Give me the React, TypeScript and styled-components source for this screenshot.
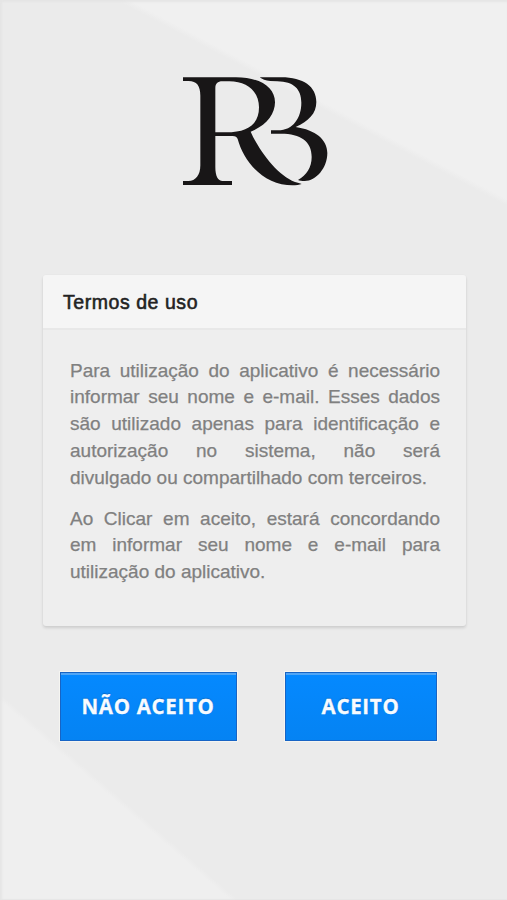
import React from "react";
import styled, { createGlobalStyle } from "styled-components";

const GlobalStyle = createGlobalStyle`
  * { box-sizing: border-box; }
  body { margin: 0; background: #ebebeb; }
`;

const Screen = styled.main`
  width: 100%;
  max-width: 507px;
  height: 900px;
  padding: 65px 41px 0 43px;
  overflow: hidden;
  display: flex;
  flex-direction: column;
  font-family: "Liberation Sans", Arial, sans-serif;
  background:
    linear-gradient(to bottom left, #f0f0f0 48.8%, transparent 50.5%) 120px 0 / 387px 204px no-repeat,
    linear-gradient(to top right, #efefef 48.8%, transparent 50.5%) 0 696px / 236px 204px no-repeat,
    #ebebeb;
  box-shadow: inset 2px 2px 2px #e5e5e5, inset 0 -1px 1px #e6e6e6;
`;

const Logo = styled.svg`
  width: 170px;
  height: 130px;
  margin-left: 127px;
  flex: none;
  fill: #181617;
`;

const Card = styled.section`
  height: 351px;
  margin-top: 80px;
  flex: none;
  border-radius: 3px;
  overflow: hidden;
  background: #eeeeee;
  box-shadow: 0 2px 3px rgba(0, 0, 0, 0.12), 0 0 2px rgba(0, 0, 0, 0.04);
`;

const CardTitle = styled.h1`
  height: 55px;
  margin: 0;
  padding: 0 20px;
  border-bottom: 2px solid #e8e8e8;
  background: #f5f5f5;
  color: #222222;
  font-size: 19.5px;
  font-weight: 400;
  line-height: 55px;
  letter-spacing: 0.55px;
  -webkit-text-stroke: 0.55px #222222;
`;

const CardBody = styled.div`
  padding: 27.6px 26px 0 27px;
  color: #808080;
`;

const Paragraph = styled.p`
  margin: 0 0 14px;
  font-size: 19px;
  line-height: 26.8px;
  text-align: justify;
  -webkit-text-stroke: 0.25px #808080;
`;

const Actions = styled.div`
  display: flex;
  gap: 48px;
  margin: 46px 0 0 17px;
`;

const Button = styled.button<{ $width: number }>`
  width: ${({ $width }) => $width}px;
  height: 69px;
  padding: 0 1px 2px 0;
  border: 1px solid #1764c5;
  border-radius: 0;
  background: linear-gradient(#0589ff, #0583f3);
  box-shadow: inset 0 2px 0 #50a5f5, 0 0 0 1px #f5f5f1;
  color: #f7fbff;
  font: bold 20.5px "Open Sans", "Noto Sans", sans-serif;
  letter-spacing: 0.7px;
  -webkit-text-stroke: 0.3px #f7fbff;
  text-shadow: 0 -1px 1px #0868c4;
  white-space: nowrap;
`;

function Monogram() {
  return (
    <Logo viewBox="0 0 510 390" role="img" aria-label="RB">
      <path
        fillRule="evenodd"
        d="M39 37H198C270 37 315 67 315 112C315 147 289 182 242 200C266 255 321 331 375 351C383 354 390 354 395 357C376 364 333 362 304 347C249 321 216 270 203 222C201 216 196 213 188 213H136V306C136 333 144 348 158 348H186V360H39V348H55C77 348 91 331 91 301V92C91 62 80 48 56 48H39ZM136 202H168C236 202 267 176 267 127C267 79 231 49 178 49H157C143 49 136 56 136 69Z"
      />
      <path d="M269 37H334C400 37 439 65 439 111C439 145 416 169 377 186C437 195 472 224 472 264C472 309 438 348 404 348C396 348 389 347 384 345C410 330 425 307 425 276C425 229 392 206 333 206H303V196H324C370 196 394 157 394 113C394 72 371 50 322 49L301 48C287 47 276 43 269 37Z" />
    </Logo>
  );
}

export default function App() {
  return (
    <>
      <GlobalStyle />
      <Screen>
        <Monogram />
        <Card>
          <CardTitle>Termos de uso</CardTitle>
          <CardBody>
            <Paragraph>
              Para utilização do aplicativo é necessário informar seu nome e
              e-mail. Esses dados são utilizado apenas para identificação e
              autorização no sistema, não será divulgado&nbsp;ou compartilhado
              com terceiros.
            </Paragraph>
            <Paragraph>
              Ao Clicar em aceito, estará concordando em informar seu nome e
              e-mail para utilização do aplicativo.
            </Paragraph>
          </CardBody>
        </Card>
        <Actions>
          <Button type="button" $width={177}>NÃO ACEITO</Button>
          <Button type="button" $width={152}>ACEITO</Button>
        </Actions>
      </Screen>
    </>
  );
}
